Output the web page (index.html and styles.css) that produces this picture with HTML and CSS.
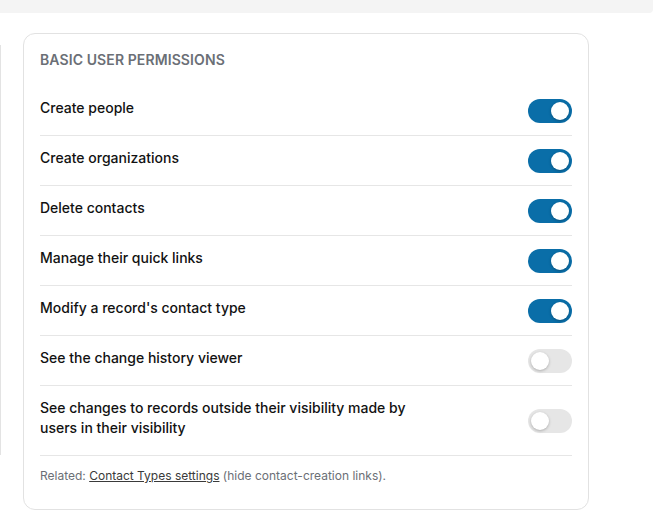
FILE: index.html
```html
<!DOCTYPE html>
<html>
<head>
<meta charset="utf-8">
<link rel="stylesheet" href="styles.css">
</head>
<body>
<div class="topbar"></div>
<div class="main">
  <div class="side"></div>
  <section class="card">
    <h2 class="title">BASIC USER PERMISSIONS</h2>
    <div class="row"><span class="label">Create people</span><span class="toggle on"><span class="knob"></span></span></div>
    <div class="row"><span class="label">Create organizations</span><span class="toggle on"><span class="knob"></span></span></div>
    <div class="row"><span class="label">Delete contacts</span><span class="toggle on"><span class="knob"></span></span></div>
    <div class="row"><span class="label">Manage their quick links</span><span class="toggle on"><span class="knob"></span></span></div>
    <div class="row"><span class="label">Modify a record's contact type</span><span class="toggle on"><span class="knob"></span></span></div>
    <div class="row"><span class="label">See the change history viewer</span><span class="toggle"><span class="knob"></span></span></div>
    <div class="row tall"><span class="label narrow">See changes to records outside their visibility made by users in their visibility</span><span class="toggle"><span class="knob"></span></span></div>
    <p class="related">Related: <a href="#" class="link">Contact Types settings</a> (hide contact-creation links).</p>
  </section>
</div>
</body>
</html>
```
FILE: styles.css
```css
* { box-sizing: border-box; }
html, body { margin: 0; padding: 0; background: #fff; }
body { font-family: Inter, "Noto Sans", sans-serif; color: #111; }
.topbar { height: 13px; width: 653px; background: #f4f4f4; border-bottom-right-radius: 4px; }
.main { display: flex; align-items: flex-start; }
.side { width: 1px; height: 410px; margin-top: 32px; background: #e3e3e3; }
.card {
  margin-left: 22px; margin-top: 20px; width: 566px;
  border: 1px solid #e2e2e2; border-radius: 12px;
  padding: 16px 16px 25px 16px;
}
.title { margin: 0 0 16px 0; font-size: 14px; font-weight: 600; color: #6b6f76; letter-spacing: 0.1px; line-height: 20px; }
.row { display: flex; align-items: center; justify-content: space-between; height: 50px; border-bottom: 1px solid #e6e6e6; }
.row.tall { height: 70px; }
.label { font-size: 14px; font-weight: 500; line-height: 20px; color: #121212; padding-bottom: 6px; }
.label.narrow { max-width: 400px; }
.toggle { position: relative; width: 44px; height: 24px; border-radius: 12px; background: #e6e6e6; flex: none; }
.toggle.on { background: #0a6ea8; }
.knob { position: absolute; top: 3px; left: 3px; width: 18px; height: 18px; border-radius: 50%; background: #fff; box-shadow: 0 1px 3px rgba(0,0,0,0.25); }
.toggle.on .knob { left: 23px; }
.related { margin: 12px 0 0 0; font-size: 12px; line-height: 16px; color: #6b6f76; }
.link { color: #3a3a3a; text-decoration: underline; }
```
